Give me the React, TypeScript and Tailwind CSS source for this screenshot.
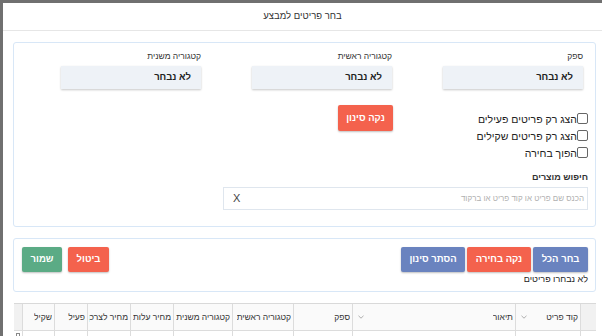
import React from "react";

const selects = [
  { label: "ספק" },
  { label: "קטגוריה ראשית" },
  { label: "קטגוריה משנית" },
];

const checks = ["הצג רק פריטים פעילים", "הצג רק פריטים שקילים", "הפוך בחירה"];

const columns = [
  { title: "", w: "w-[16px]", sort: false },
  { title: "קוד פריט", w: "w-[65px]", sort: true },
  { title: "תיאור", w: "w-[163px]", sort: true },
  { title: "ספק", w: "w-[59px]", sort: false },
  { title: "קטגוריה ראשית", w: "w-[61px]", sort: false },
  { title: "קטגוריה משנית", w: "w-[59px]", sort: false },
  { title: "מחיר עלות", w: "w-[43px]", sort: false },
  { title: "מחיר לצרכן", w: "w-[43px]", sort: false },
  { title: "פעיל", w: "w-[33px]", sort: false },
  { title: "שקיל", w: "w-[32px]", sort: false },
  { title: "", w: "w-[8px]", sort: false },
];

function ActionButton({ label, color, width }: { label: string; color: string; width: string }) {
  return (
    <button
      className={`${color} ${width} h-[25px] rounded-[2px] text-[9.5px] font-bold text-white shadow-[0_1px_2px_rgba(0,0,0,0.25)] flex items-center justify-center`}
    >
      {label}
    </button>
  );
}

export default function App() {
  return (
    <div
      dir="rtl"
      className="w-[602px] h-[336px] overflow-hidden bg-[#707070] pt-[3px] pl-[3px] text-[#333] font-['Liberation_Sans','DejaVu_Sans',sans-serif]"
    >
      <div className="h-full bg-white flex flex-col">
        {/* Modal header */}
        <div className="h-[28px] shrink-0 flex items-center justify-center border-b border-[#e6e6e6] text-[9.5px] text-[#333]">
          בחר פריטים למבצע
        </div>

        <div className="pr-[6px] pl-[10px]">
          {/* Filter panel */}
          <div className="mt-[11px] h-[185px] border border-[#d8e7f7] rounded-[3px] pr-[7px] pt-[7px]">
            <div className="flex">
              {selects.map((s, i) => (
                <div key={s.label} className={`${i < 2 ? "w-[191px]" : "flex-1"} flex flex-col items-start pr-[5px]`}>
                  <div className="h-[12px] leading-[12px] text-[8.5px] text-[#333]">{s.label}</div>
                  <div className="mt-[4px] w-[140px] h-[23px] bg-[#eef2f7] shadow-[0_1px_2px_rgba(0,0,0,0.22)] flex items-center pr-[10px] text-[9.5px] font-bold text-[#222]">
                    לא נבחר
                  </div>
                </div>
              ))}
            </div>

            <div className="mt-[16px] flex items-start">
              <div className="w-[195px] pt-[5px] flex flex-col">
                {checks.map((c) => (
                  <label key={c} className="h-[17px] flex items-center text-[10.5px] text-[#222]">
                    <span className="w-[11px] h-[11px] border border-[#666] rounded-[2px] bg-white shrink-0" />
                    <span className="leading-[14px]">{c}</span>
                  </label>
                ))}
              </div>
              <button className="w-[55px] h-[26px] bg-[#f4624d] rounded-[2px] text-white text-[9.5px] font-bold shadow-[0_1px_2px_rgba(0,0,0,0.25)]">
                נקה סינון
              </button>
            </div>

            <div className="mt-[10px] h-[12px] leading-[12px] text-[9px] font-bold text-[#333]">חיפוש מוצרים</div>
            <div className="mt-[4px] w-[365px] h-[23px] border border-[#dfe6ee] flex items-center justify-between pr-[3px] pl-[9px]">
              <span className="text-[8px] text-[#b0b0b0]">הכנס שם פריט או קוד פריט או ברקוד</span>
              <span className="text-[11px] text-[#444]">X</span>
            </div>
          </div>

          {/* Actions panel */}
          <div className="mt-[11px] h-[54px] border border-[#d8e7f7] rounded-[3px] pr-[7px] pl-[8px] pt-[8px] flex justify-between">
            <div className="flex flex-col items-start">
              <div className="flex gap-[2px]">
                <ActionButton label="בחר הכל" color="bg-[#6a83bf]" width="w-[55px]" />
                <ActionButton label="נקה בחירה" color="bg-[#f4624d]" width="w-[64px]" />
                <ActionButton label="הסתר סינון" color="bg-[#6a83bf]" width="w-[64px]" />
              </div>
              <div className="mt-[1px] h-[12px] leading-[12px] text-[9px] text-[#222]">לא נבחרו פריטים</div>
            </div>
            <div className="flex gap-[6px]">
              <ActionButton label="ביטול" color="bg-[#f4624d]" width="w-[41px]" />
              <ActionButton label="שמור" color="bg-[#5bab85]" width="w-[40px]" />
            </div>
          </div>

          {/* Table */}
          <div className="mt-[11px] ml-[1px] border-t border-[#d9d9d9]">
            <div className="flex h-[27px] bg-[#fafafa] border-b border-[#dcdcdc]">
              {columns.map((c, i) => (
                <div
                  key={i}
                  className={`${c.w} shrink-0 h-full flex items-center justify-between pr-[2px] overflow-hidden whitespace-nowrap text-[8.5px] text-[#333] ${
                    c.sort ? "pl-[5px]" : "pl-[1px]"
                  } ${i < columns.length - 1 ? "border-l border-[#dcdcdc]" : ""} ${
                    i === 0 || i === columns.length - 1 ? "bg-[#f1f1f1]" : ""
                  }`}
                >
                  <span className="overflow-hidden">{c.title}</span>
                  {c.sort && (
                    <svg width="6" height="4" viewBox="0 0 6 4" className="shrink-0">
                      <path d="M0.5 0.8 L3 3.2 L5.5 0.8" fill="none" stroke="#9a9a9a" strokeWidth="0.8" />
                    </svg>
                  )}
                </div>
              ))}
            </div>
            <div className="flex h-[20px] bg-white">
              {columns.map((c, i) => (
                <div
                  key={i}
                  className={`${c.w} shrink-0 h-full ${i < columns.length - 1 ? "border-l border-[#dcdcdc]" : ""} ${
                    i === columns.length - 1 ? "flex justify-center pt-[2px]" : ""
                  }`}
                >
                  {i === columns.length - 1 && <span className="w-[4px] h-[4px] border border-[#888]" />}
                </div>
              ))}
            </div>
          </div>
        </div>
      </div>
    </div>
  );
}
